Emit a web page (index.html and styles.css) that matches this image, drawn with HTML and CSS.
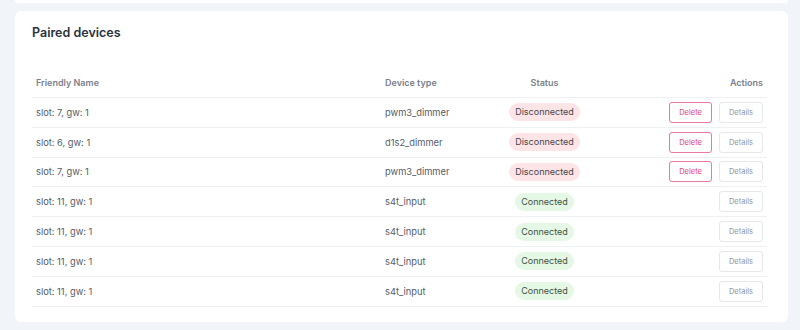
FILE: index.html
```html
<!DOCTYPE html>
<html lang="en">
<head>
  <meta charset="UTF-8">
  <meta name="viewport" content="width=device-width, initial-scale=1">
  <title>Paired devices</title>
  <link rel="stylesheet" href="styles.css">
</head>
<body>
  <div class="card card-top"></div>
  <div class="card">
    <h2>Paired devices</h2>
    <table class="devices">
      <thead>
        <tr>
          <th class="col-name">Friendly Name</th>
          <th class="col-type">Device type</th>
          <th class="col-status">Status</th>
          <th class="col-actions">Actions</th>
        </tr>
      </thead>
      <tbody>
        <tr>
          <td>slot: 7, gw: 1</td>
          <td>pwm3_dimmer</td>
          <td class="col-status"><span class="pill pill-off">Disconnected</span></td>
          <td class="col-actions"><button class="btn btn-delete">Delete</button><button class="btn">Details</button></td>
        </tr>
        <tr>
          <td>slot: 6, gw: 1</td>
          <td>d1s2_dimmer</td>
          <td class="col-status"><span class="pill pill-off">Disconnected</span></td>
          <td class="col-actions"><button class="btn btn-delete">Delete</button><button class="btn">Details</button></td>
        </tr>
        <tr>
          <td>slot: 7, gw: 1</td>
          <td>pwm3_dimmer</td>
          <td class="col-status"><span class="pill pill-off">Disconnected</span></td>
          <td class="col-actions"><button class="btn btn-delete">Delete</button><button class="btn">Details</button></td>
        </tr>
        <tr>
          <td>slot: 11, gw: 1</td>
          <td>s4t_input</td>
          <td class="col-status"><span class="pill pill-on">Connected</span></td>
          <td class="col-actions"><button class="btn">Details</button></td>
        </tr>
        <tr>
          <td>slot: 11, gw: 1</td>
          <td>s4t_input</td>
          <td class="col-status"><span class="pill pill-on">Connected</span></td>
          <td class="col-actions"><button class="btn">Details</button></td>
        </tr>
        <tr>
          <td>slot: 11, gw: 1</td>
          <td>s4t_input</td>
          <td class="col-status"><span class="pill pill-on">Connected</span></td>
          <td class="col-actions"><button class="btn">Details</button></td>
        </tr>
        <tr>
          <td>slot: 11, gw: 1</td>
          <td>s4t_input</td>
          <td class="col-status"><span class="pill pill-on">Connected</span></td>
          <td class="col-actions"><button class="btn">Details</button></td>
        </tr>
      </tbody>
    </table>
  </div>
</body>
</html>
```

FILE: styles.css
```css
body {
  margin: 0;
  padding: 0 12px 0 15px;
  background-color: #f1f4f8;
  font-family: Inter, "Noto Sans", sans-serif;
  color: #4b5563;
}
.card {
  background-color: #fff;
  border-radius: 6px;
  padding: 14px 21px 15px 17px;
  margin-bottom: 8px;
}
.card-top {
  height: 3px;
  padding: 0;
  border-radius: 0 0 6px 6px;
}
h2 {
  margin: 0 0 27px 0;
  font-size: 12.5px;
  line-height: 16px;
  font-weight: 600;
  color: #2a3140;
}
/* Device table */
.devices {
  width: 100%;
  border-collapse: collapse;
  table-layout: fixed;
}
.devices th {
  height: 29px;
  padding: 0 4px;
  font-size: 9px;
  font-weight: 600;
  color: #7b818c;
  text-align: left;
  border-bottom: 1px solid #eef0f3;
}
.devices td {
  height: 28.8px;
  padding: 0 4px;
  font-size: 9.3px;
  color: #555b66;
  border-bottom: 1px solid #eef0f3;
  white-space: nowrap;
}
.col-name {
  width: 341px;
}
.col-type {
  width: 92px;
}
.devices .col-status {
  width: 119px;
  text-align: center;
}
.devices .col-actions {
  text-align: right;
}
.pill {
  display: inline-block;
  height: 18px;
  line-height: 18px;
  padding: 0 6.5px;
  border-radius: 9px;
  font-size: 9px;
}
.pill-off {
  background-color: #fde4e7;
  color: #44444c;
}
.pill-on {
  background-color: #e5f8e6;
  color: #3f5142;
}
.btn {
  height: 21px;
  padding: 0 9px;
  margin-left: 7px;
  border: 1px solid #e5e7eb;
  border-radius: 3px;
  background-color: #fff;
  font-family: Inter, "Noto Sans", sans-serif;
  font-size: 7.5px;
  color: #8f96a3;
  vertical-align: middle;
}
.btn-delete {
  border-color: #e77aa0;
  color: #e0457b;
}
```
